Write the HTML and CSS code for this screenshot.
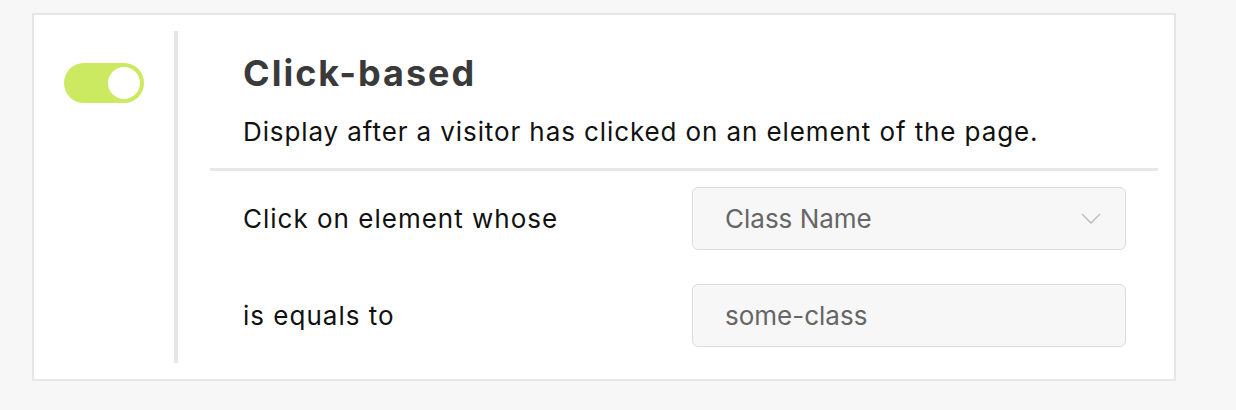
FILE: index.html
```html
<!DOCTYPE html>
<html lang="en">
<head>
    <meta charset="UTF-8">
    <meta name="viewport" content="width=device-width, initial-scale=1.0">
    <title>Click-based trigger</title>
    <link rel="stylesheet" href="styles.css">
</head>
<body>
    <div class="trigger-card">
        <div class="trigger-side">
            <label class="toggle">
                <input type="checkbox" checked>
                <span class="toggle-track"><span class="toggle-knob"></span></span>
            </label>
        </div>
        <div class="trigger-body">
            <div class="trigger-head">
                <h2 class="trigger-title">Click-based</h2>
                <p class="trigger-desc">Display after a visitor has clicked on an element of the page.</p>
            </div>
            <div class="trigger-rows">
                <div class="trigger-row">
                    <span class="row-label">Click on element whose</span>
                    <div class="field select-field">
                        <span>Class Name</span>
                        <svg class="chevron" width="20" height="12" viewBox="0 0 20 12">
                            <path d="M1 1 L10 10 L19 1" fill="none" stroke="#b9b9bd" stroke-width="1.4"/>
                        </svg>
                    </div>
                </div>
                <div class="trigger-row">
                    <span class="row-label">is equals to</span>
                    <div class="field">
                        <span>some-class</span>
                    </div>
                </div>
            </div>
        </div>
    </div>
</body>
</html>
```

FILE: styles.css
```css
body {
    margin: 0;
    padding: 13px 0 0 32px;
    background-color: #f7f7f7;
    font-family: "Inter", "Noto Sans", sans-serif;
    color: #111111;
}

.trigger-card {
    display: flex;
    width: 1144px;
    box-sizing: border-box;
    padding: 16px 16px 16px 0;
    background-color: #ffffff;
    border: 2px solid #e6e6ea;
}

.trigger-side {
    width: 110px;
    padding: 32px 0 0 30px;
    border-right: 4px solid #e6e6ea;
}

.toggle input {
    display: none;
}

.toggle-track {
    display: flex;
    justify-content: flex-end;
    align-items: center;
    width: 80px;
    height: 40px;
    padding: 0 4px;
    box-sizing: border-box;
    border-radius: 20px;
    background-color: #cbe961;
}

.toggle-knob {
    width: 32px;
    height: 32px;
    border-radius: 50%;
    background-color: #ffffff;
}

.trigger-body {
    flex: 1;
    padding-left: 32px;
}

.trigger-head {
    padding: 21px 0 20px 33px;
    border-bottom: 3px solid #e6e6eb;
}

.trigger-title {
    margin: 0;
    font-size: 36px;
    line-height: 43px;
    font-weight: 700;
    letter-spacing: 2px;
    color: #3a3a3a;
}

.trigger-desc {
    margin: 21px 0 0;
    font-size: 26px;
    line-height: 32px;
    letter-spacing: 0.9px;
}

.trigger-rows {
    display: flex;
    flex-direction: column;
    gap: 34px;
    padding: 16px 32px 16px 33px;
}

.trigger-row {
    display: grid;
    grid-template-columns: 449px 1fr;
    align-items: center;
}

.row-label {
    font-size: 26px;
    letter-spacing: 1px;
}

.field {
    display: flex;
    align-items: center;
    justify-content: space-between;
    height: 63px;
    padding: 0 24px 0 32px;
    box-sizing: border-box;
    border: 1.5px solid #dcdce0;
    border-radius: 6px;
    background-color: #f7f7f7;
    font-size: 26px;
    color: #666666;
}
```
